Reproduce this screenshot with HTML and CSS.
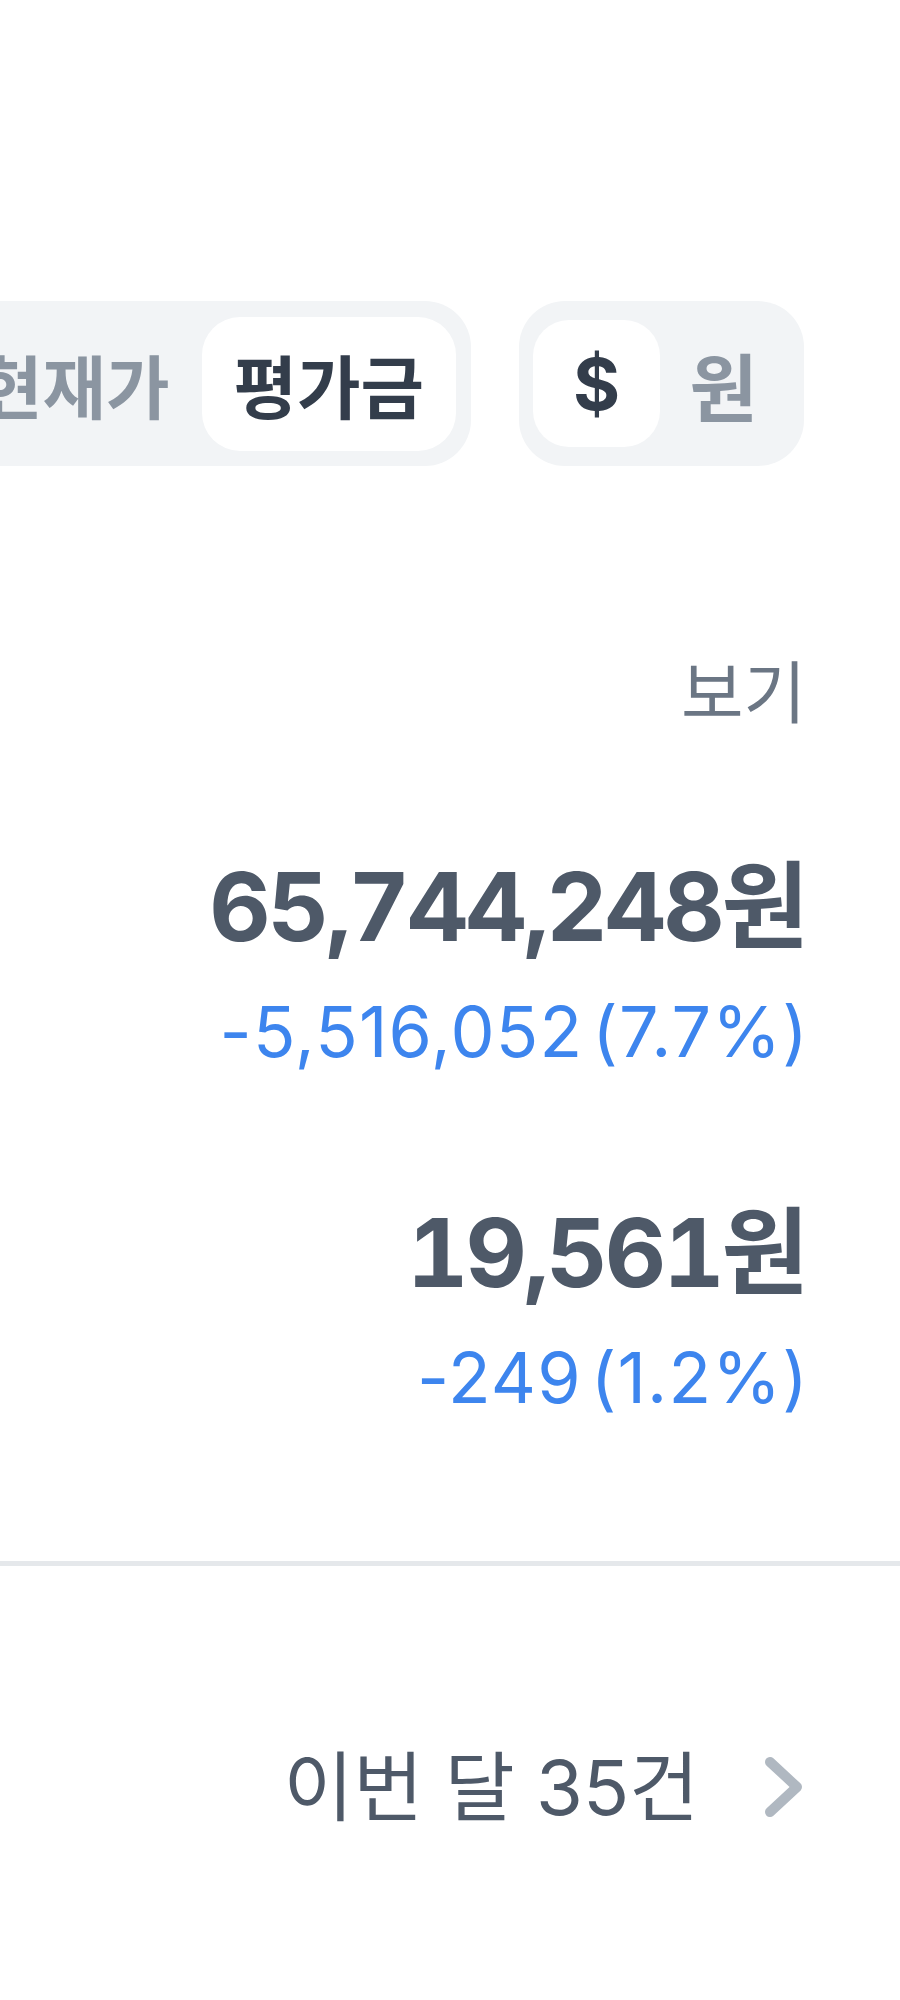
FILE: index.html
```html
<!DOCTYPE html>
<html lang="ko">
<head>
<meta charset="utf-8">
<title>평가금</title>
<link rel="stylesheet" href="styles.css">
</head>
<body>
<main class="page">
  <div class="toolbar">
    <div class="segment segment-view">
      <span class="seg-item">현재가</span>
      <span class="seg-item seg-active">평가금</span>
    </div>
    <div class="segment segment-currency">
      <span class="cur-item cur-active">$</span>
      <span class="cur-item">원</span>
    </div>
  </div>

  <div class="view-row">
    <span class="view-link">보기</span>
  </div>

  <section class="values">
    <div class="value-block">
      <div class="amount">65,744,248원</div>
      <div class="change">-5,516,052 (7.7%)</div>
    </div>
    <div class="value-block value-second">
      <div class="amount">19,561원</div>
      <div class="change">-249 (1.2%)</div>
    </div>
  </section>

  <hr class="divider">

  <div class="history-row">
    <span class="history-text">이번 달 35건</span>
    <svg class="chevron" width="37" height="60" viewBox="0 0 37 60" aria-hidden="true">
      <polyline points="5,5 32,30 5,55" fill="none" stroke="#b0b8c1" stroke-width="10" stroke-linecap="round" stroke-linejoin="round"/>
    </svg>
  </div>
</main>
</body>
</html>
```

FILE: styles.css
```css
html, body {
  margin: 0;
  padding: 0;
  background: #ffffff;
  overflow: hidden;
}

body {
  font-family: Inter, "Noto Sans CJK KR", sans-serif;
  color: #4e5968;
}

.page {
  width: 900px;
  box-sizing: border-box;
  padding-right: 94px;
}

.toolbar {
  margin-top: 301px;
  margin-right: 2px;
  display: flex;
  justify-content: flex-end;
  align-items: center;
  gap: 48px;
  height: 165px;
}

.segment {
  display: flex;
  align-items: center;
  flex-shrink: 0;
  height: 165px;
  box-sizing: border-box;
  background: #f2f4f6;
  border-radius: 46px;
}

.segment-view {
  padding: 16px 15px 15px 15px;
}

.seg-item {
  display: flex;
  align-items: center;
  justify-content: center;
  height: 134px;
  padding: 0 32px;
  font-family: "Noto Sans CJK KR", sans-serif;
  font-size: 69px;
  font-weight: 700;
  color: #8b95a1;
  white-space: nowrap;
  border-radius: 38px;
}

.seg-active {
  background: #ffffff;
  color: #333d4b;
}

.segment-currency {
  padding: 0 17px 0 14px;
}

.cur-item {
  display: flex;
  align-items: center;
  justify-content: center;
  width: 127px;
  height: 127px;
  font-family: "Noto Sans CJK KR", sans-serif;
  font-size: 74px;
  font-weight: 700;
  color: #8b95a1;
  border-radius: 36px;
}

.cur-active {
  background: #ffffff;
  color: #333d4b;
  font-family: Inter, sans-serif;
  font-size: 72px;
}

.view-row {
  display: flex;
  justify-content: flex-end;
  margin-top: 182px;
}

.view-link {
  font-family: "Noto Sans CJK KR", sans-serif;
  font-size: 68px;
  line-height: 1.2;
  color: #6b7684;
}

.values {
  display: flex;
  flex-direction: column;
  align-items: flex-end;
  margin-top: 120px;
}

.value-block {
  display: flex;
  flex-direction: column;
  align-items: flex-end;
  gap: 26px;
}

.value-second {
  margin-top: 122px;
}

.amount {
  font-size: 95px;
  line-height: 1.2;
  font-weight: 700;
  color: #4e5968;
  letter-spacing: -3px;
  font-variant-numeric: tabular-nums;
}

.change {
  font-size: 70px;
  line-height: 1.2;
  font-weight: 400;
  color: #3d85ee;
  letter-spacing: 1.2px;
  word-spacing: -12px;
  margin-right: -3px;
}

.divider {
  border: 0;
  height: 5px;
  background: #e5e8eb;
  margin: 141px -94px 0 0;
}

.history-row {
  display: flex;
  justify-content: flex-end;
  align-items: center;
  gap: 66px;
  margin-top: 176px;
  margin-right: 4px;
}

.history-text {
  font-size: 76px;
  line-height: 1.2;
  color: #4e5968;
}

.chevron {
  display: block;
}
```
